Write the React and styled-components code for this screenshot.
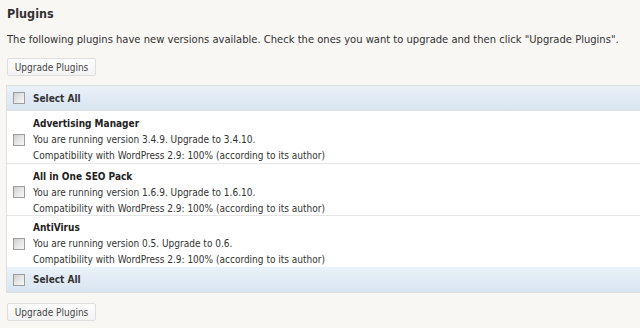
import React from "react";
import styled, { createGlobalStyle } from "styled-components";

const Global = createGlobalStyle`
  html, body { margin: 0; padding: 0; background: #f8f7f3; }
  body {
    font-family: "DejaVu Sans Condensed", "DejaVu Sans", Verdana, sans-serif;
    font-stretch: condensed;
    font-size: 10px;
    color: #333;
  }
`;

const Page = styled.div`
  padding: 0 0 0 7px;
  width: 640px;
  height: 328px;
  box-sizing: border-box;
  overflow: hidden;
`;

const Title = styled.h2`
  margin: 0;
  padding: 6px 0 0 0;
  font-size: 12.5px;
  font-weight: bold;
  color: #333;
  line-height: 16px;
`;

const Intro = styled.p`
  margin: 11px 0 0 0;
  font-size: 11.1px;
  line-height: 14px;
  color: #333;
  white-space: nowrap;
`;

const Button = styled.button`
  display: block;
  font-family: inherit;
  font-stretch: condensed;
  font-size: 10px;
  color: #464646;
  background: linear-gradient(#fdfdfd, #f3f3f3);
  border: 1px solid #dedede;
  border-radius: 2px;
  padding: 0;
  height: 18px;
  width: 89px;
  margin: ${(p) => p.$mt || 0}px 0 0 0;
  box-sizing: border-box;
  white-space: nowrap;
`;

const Table = styled.div`
  margin-top: 9px;
  margin-left: -1px;
  width: 640px;
  border: 1px solid #dfdfdf;
  border-right: none;
  background: #fff;
`;

const BarRow = styled.div`
  display: flex;
  align-items: center;
  height: ${(p) => p.$h}px;
  background: linear-gradient(#eaf1f9, #d8e5f1);
  border-bottom: ${(p) => (p.$border ? "1px solid #dfdfdf" : "none")};
  font-weight: bold;
  color: #333;
`;

const Box = styled.span`
  display: inline-block;
  width: 10px;
  height: 10px;
  margin-left: 6px;
  margin-right: 8px;
  border: 1px solid #9d9d9d;
  background: linear-gradient(135deg, #cfcfcf 0%, #e6e6e6 50%, #f8f8f8 100%);
  flex: none;
  align-self: center;
`;

const PluginRow = styled.div`
  display: flex;
  align-items: flex-start;
  box-sizing: border-box;
  height: ${(p) => p.$h}px;
  padding-top: ${(p) => p.$pt}px;
  border-top: ${(p) => (p.$first ? "none" : "1px solid #e6e6e6")};
  background: #fff;
`;

const Info = styled.div`
  display: flex;
  flex-direction: column;
  line-height: 16px;
`;

const Name = styled.strong`
  color: #222;
`;

const plugins = [
  { name: "Advertising Manager", from: "3.4.9", to: "3.4.10", h: 52, pt: 5 },
  { name: "All in One SEO Pack", from: "1.6.9", to: "1.6.10", h: 52, pt: 5 },
  { name: "AntiVirus", from: "0.5", to: "0.6", h: 52, pt: 4 },
];

export default function App() {
  return (
    <>
      <Global />
      <Page>
        <Title>Plugins</Title>
        <Intro>
          The following plugins have new versions available. Check the ones you want to upgrade and then click "Upgrade Plugins".
        </Intro>
        <Button $mt={11}>Upgrade Plugins</Button>
        <Table>
          <BarRow $h={24} $border>
            <Box />
            Select All
          </BarRow>
          {plugins.map((p, i) => (
            <PluginRow key={p.name} $h={p.h} $pt={p.pt} $first={i === 0}>
              <Box />
              <Info>
                <Name>{p.name}</Name>
                <span>You are running version {p.from}. Upgrade to {p.to}.</span>
                <span>Compatibility with WordPress 2.9: 100% (according to its author)</span>
              </Info>
            </PluginRow>
          ))}
          <BarRow $h={25}>
            <Box />
            Select All
          </BarRow>
        </Table>
        <Button $mt={10}>Upgrade Plugins</Button>
      </Page>
    </>
  );
}
